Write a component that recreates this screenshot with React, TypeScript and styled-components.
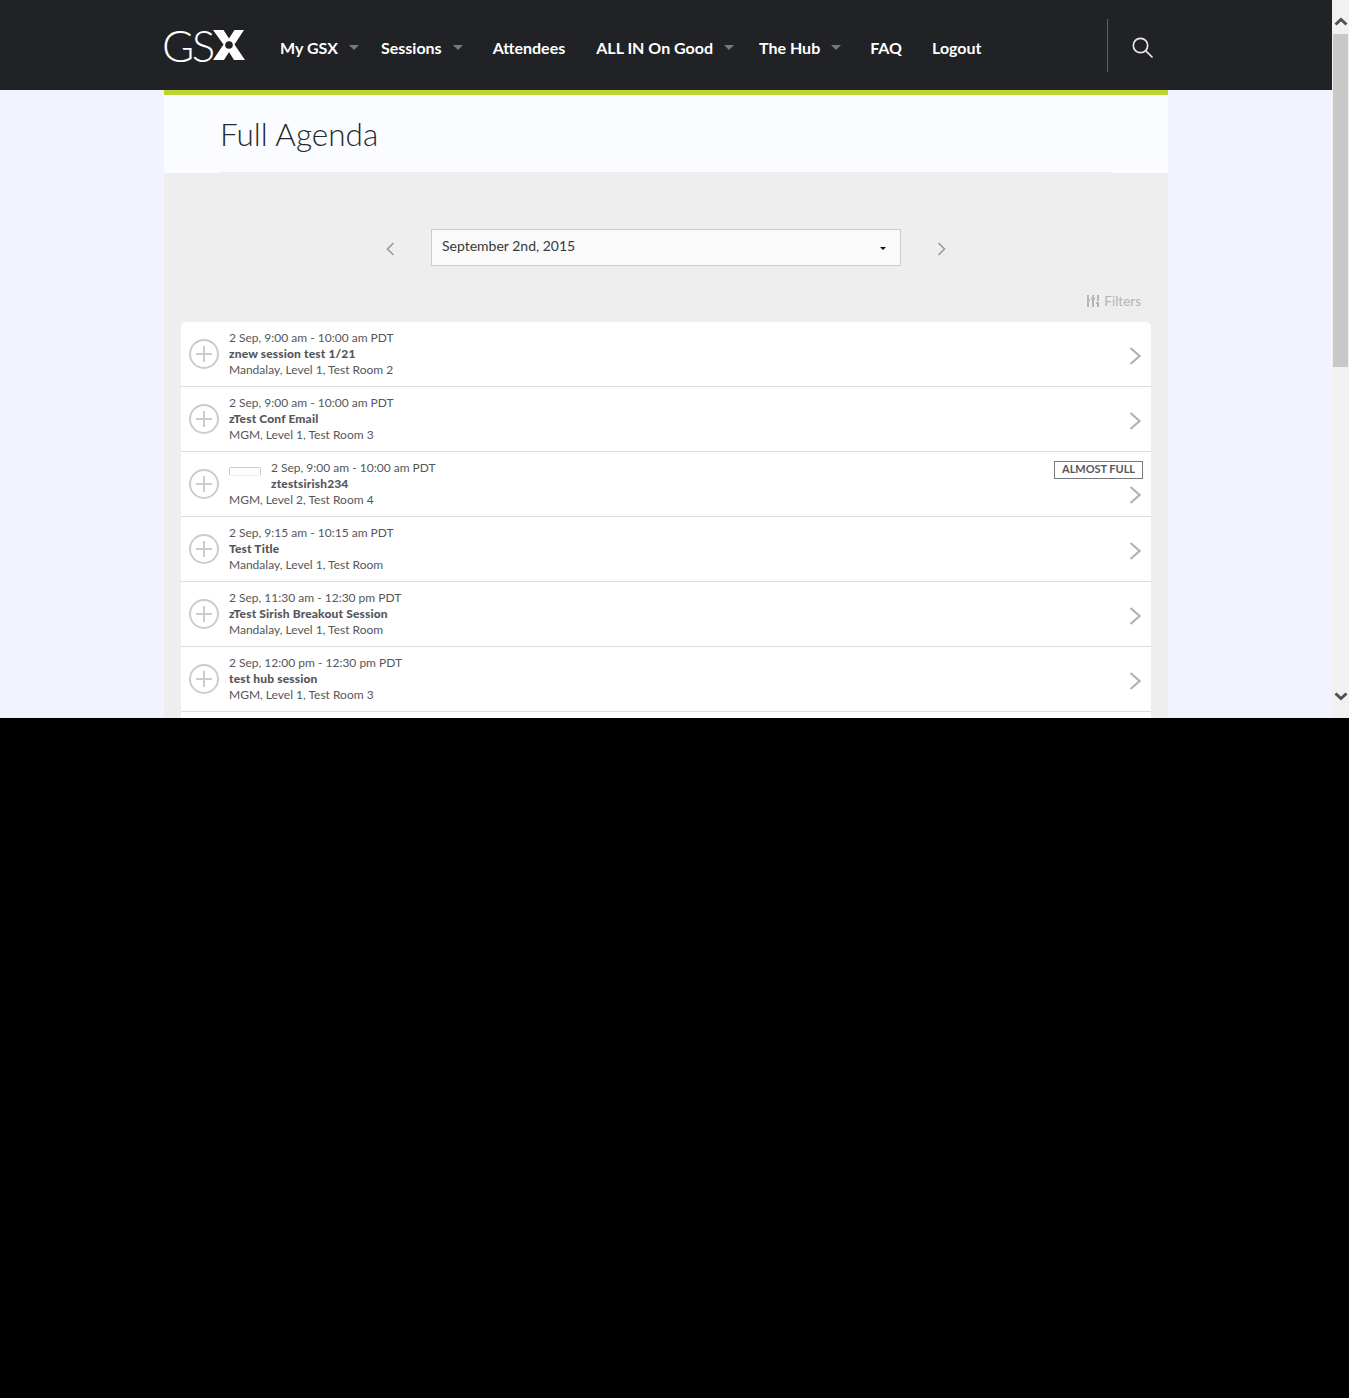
import React, { FC } from "react";
import styled, { createGlobalStyle } from "styled-components";

const GlobalStyle = createGlobalStyle`
  html, body {
    margin: 0;
    padding: 0;
    background: #000;
  }
  body {
    font-family: "Lato", "Liberation Sans", sans-serif;
    min-height: 1398px;
  }
`;

const Frame = styled.div`
  display: flex;
  width: 1349px;
  height: 718px;
  overflow: hidden;
`;

const Page = styled.div`
  width: 1332px;
  flex: none;
  background: #f1f3fe;
`;

const Header = styled.header`
  display: flex;
  align-items: center;
  height: 90px;
  padding-left: 164px;
  background: #202226;
`;

const Logo = styled.div`
  display: flex;
  align-items: center;
  width: 81px;
  height: 30px;
  margin-right: 35px;
  color: #fff;
`;

const LogoText = styled.span`
  margin-left: -2px;
  font-size: 44px;
  font-weight: 300;
  line-height: 30px;
  letter-spacing: -2.5px;
`;

const Nav = styled.nav`
  display: flex;
  align-items: center;
  box-sizing: border-box;
  width: 827px;
  height: 54px;
  padding-top: 4px;
`;

const NavItem = styled.a<{ $left: number }>`
  display: flex;
  align-items: center;
  margin-left: ${({ $left }) => $left}px;
  color: #fff;
  font-size: 16px;
  font-weight: 700;
  white-space: nowrap;
`;

const NavCaret = styled.i`
  width: 0;
  height: 0;
  margin-left: 11px;
  border-top: 5px solid #77797c;
  border-left: 5px solid transparent;
  border-right: 5px solid transparent;
`;

const SearchBox = styled.div`
  display: flex;
  align-items: center;
  height: 53px;
  padding-left: 24px;
  border-left: 1px solid #5d5f62;
  color: #e9e9e9;
`;

const SearchIcon = styled.svg`
  width: 22px;
  height: 22px;
  margin-top: 6px;
  fill: none;
  stroke: currentColor;
  stroke-width: 1.7;
`;

const Wrapper = styled.main`
  width: 1004px;
  margin-left: 164px;
  border-top: 5px solid #bcd630;
`;

const TitlePanel = styled.div`
  padding: 0 56px;
  background: #fbfcff;
`;

const Title = styled.h1`
  box-sizing: border-box;
  height: 78px;
  margin: 0;
  padding-top: 19px;
  border-bottom: 1px solid #eee;
  color: #26282c;
  font-size: 31.5px;
  font-weight: 300;
  line-height: 40px;
`;

const Content = styled.section`
  padding: 56px 17px 0;
  background: #eee;
`;

const DateRow = styled.div`
  display: flex;
  align-items: center;
  justify-content: center;
  gap: 36px;
  height: 37px;
`;

const DateSelect = styled.div`
  display: flex;
  align-items: center;
  justify-content: space-between;
  box-sizing: border-box;
  width: 470px;
  height: 37px;
  padding: 0 14px 4px 10px;
  border: 1px solid #ccc;
  background: #fafafa;
  color: #37393c;
  font-size: 14px;
`;

const SelectCaret = styled.i`
  width: 0;
  height: 0;
  margin-top: 5px;
  border-top: 3px solid #111;
  border-left: 3px solid transparent;
  border-right: 3px solid transparent;
`;

const PagerIcon = styled.svg`
  width: 9px;
  height: 14px;
  margin-top: 3px;
  fill: none;
  stroke: #9a9a9a;
  stroke-width: 1.6;
`;

const FilterRow = styled.div`
  display: flex;
  align-items: center;
  justify-content: flex-end;
  gap: 5px;
  box-sizing: border-box;
  height: 56px;
  padding: 14px 10px 0 0;
  color: #b4b4b4;
  font-size: 13.5px;
`;

const List = styled.div`
  overflow: hidden;
  border-radius: 5px 5px 0 0;
  background: #fff;
`;

const Row = styled.article`
  display: flex;
  box-sizing: border-box;
  height: 65px;
  padding: 8px 8px 0;
  border-bottom: 1px solid #dcdcdc;
  color: #55575a;
  font-size: 12px;
  line-height: 16px;
`;

const AddIcon = styled.svg`
  flex: none;
  width: 32px;
  height: 32px;
  margin: 8px 9px 0 -1px;
  fill: none;
  stroke: #ccc;
  stroke-width: 2;
`;

const RowBody = styled.div`
  flex: 1;
  white-space: nowrap;
`;

const Heading = styled.div`
  display: flex;
`;

const Thumb = styled.span`
  box-sizing: border-box;
  width: 32px;
  height: 9px;
  margin: 7px 10px 0 0;
  border: 1px solid #ccc;
  border-bottom-color: #ececec;
  border-radius: 2px;
`;

const SessionName = styled.div`
  font-weight: 900;
  letter-spacing: 0.15px;
`;

const RowSide = styled.div`
  display: flex;
  flex-direction: column;
  align-items: flex-end;
`;

const Badge = styled.span`
  box-sizing: border-box;
  height: 18px;
  margin-top: 1px;
  padding: 0 7px;
  border: 1px solid #77797c;
  color: #55575a;
  font-size: 11px;
  font-weight: 700;
  line-height: 14px;
  letter-spacing: -0.05px;
`;

const RowArrow = styled.svg<{ $low?: boolean }>`
  width: 12px;
  height: 18px;
  margin-top: ${({ $low }) => ($low ? "7px" : "17px")};
  margin-right: 2px;
  fill: none;
  stroke: #b3b3b3;
  stroke-width: 2.2;
`;

const Scrollbar = styled.div`
  display: flex;
  flex-direction: column;
  flex: none;
  box-sizing: border-box;
  width: 17px;
  padding: 13px 0 13px 1px;
  background: #f1f1f1;
`;

const ScrollButton = styled.svg`
  width: 16px;
  height: 17px;
  flex: none;
  fill: none;
  stroke: #505050;
  stroke-width: 3;
`;

const ScrollTrack = styled.div`
  flex: 1;
  padding-top: 4px;
`;

const ScrollThumb = styled.div`
  height: 333px;
  margin-right: 1px;
  background: #c8c8c8;
`;

interface Session {
  time: string;
  name: string;
  place: string;
  thumb?: boolean;
  badge?: string;
}

const sessions: Session[] = [
  { time: "2 Sep, 9:00 am - 10:00 am PDT", name: "znew session test 1/21", place: "Mandalay, Level 1, Test Room 2" },
  { time: "2 Sep, 9:00 am - 10:00 am PDT", name: "zTest Conf Email", place: "MGM, Level 1, Test Room 3" },
  { time: "2 Sep, 9:00 am - 10:00 am PDT", name: "ztestsirish234", place: "MGM, Level 2, Test Room 4", thumb: true, badge: "ALMOST FULL" },
  { time: "2 Sep, 9:15 am - 10:15 am PDT", name: "Test Title", place: "Mandalay, Level 1, Test Room" },
  { time: "2 Sep, 11:30 am - 12:30 pm PDT", name: "zTest Sirish Breakout Session", place: "Mandalay, Level 1, Test Room" },
  { time: "2 Sep, 12:00 pm - 12:30 pm PDT", name: "test hub session", place: "MGM, Level 1, Test Room 3" },
];

const navItems = [
  { label: "My GSX", left: 0, caret: true },
  { label: "Sessions", left: 22, caret: true },
  { label: "Attendees", left: 30, caret: false },
  { label: "ALL IN On Good", left: 31, caret: true },
  { label: "The Hub", left: 25, caret: true },
  { label: "FAQ", left: 29, caret: false },
  { label: "Logout", left: 30, caret: false },
];

const SessionRow: FC<{ session: Session }> = ({ session }) => (
  <Row>
    <AddIcon viewBox="0 0 32 32">
      <circle cx="16" cy="16" r="14" />
      <path d="M16 8v16M8 16h16" />
    </AddIcon>
    <RowBody>
      {session.thumb ? (
        <Heading>
          <Thumb />
          <div>
            <div>{session.time}</div>
            <SessionName>{session.name}</SessionName>
          </div>
        </Heading>
      ) : (
        <>
          <div>{session.time}</div>
          <SessionName>{session.name}</SessionName>
        </>
      )}
      <div>{session.place}</div>
    </RowBody>
    <RowSide>
      {session.badge && <Badge>{session.badge}</Badge>}
      <RowArrow $low={!!session.badge} viewBox="0 0 12 18">
        <path d="M1.5 1l9 8-9 8" />
      </RowArrow>
    </RowSide>
  </Row>
);

const App: FC = () => (
  <>
    <GlobalStyle />
    <Frame>
      <Page>
        <Header>
          <Logo>
            <LogoText>GS</LogoText>
            <svg width="32" height="30" viewBox="0 0 32 30">
              <path
                fill="#fff"
                d="M0 0h10.5L16 8.5 21.5 0H31l-9.5 14.5L32 30H21l-5-8-5 8H0l10.5-15.500z"
              />
              <circle cx="16" cy="15" r="3.800" fill="#202226" />
            </svg>
          </Logo>
          <Nav>
            {navItems.map((item) => (
              <NavItem key={item.label} $left={item.left}>
                {item.label}
                {item.caret && <NavCaret />}
              </NavItem>
            ))}
          </Nav>
          <SearchBox>
            <SearchIcon viewBox="0 0 22 22">
              <circle cx="8.500" cy="8.500" r="7.200" />
              <path d="M13.800 13.800L20.500 20.500" />
            </SearchIcon>
          </SearchBox>
        </Header>
        <Wrapper>
          <TitlePanel>
            <Title>Full Agenda</Title>
          </TitlePanel>
          <Content>
            <DateRow>
              <PagerIcon viewBox="0 0 9 14">
                <path d="M7.500 1L1.500 7l6 6" />
              </PagerIcon>
              <DateSelect>
                September 2nd, 2015
                <SelectCaret />
              </DateSelect>
              <PagerIcon viewBox="0 0 9 14">
                <path d="M1.500 1l6 6-6 6" />
              </PagerIcon>
            </DateRow>
            <FilterRow>
              <svg width="12" height="12" viewBox="0 0 12 12" fill="#b4b4b4">
                <path d="M0 0h2v5H0zM0 7h2v5H0zM5 0h2v2H5zM5 4h2v8H5zM10 0h2v6h-2zM10 8h2v4h-2zM0 4.500h3v2H0zM4 2.500h4v2H4zM9 7h3v2H9z" />
              </svg>
              Filters
            </FilterRow>
            <List>
              {sessions.map((session) => (
                <SessionRow key={session.name} session={session} />
              ))}
              <Row />
            </List>
          </Content>
        </Wrapper>
      </Page>
      <Scrollbar>
        <ScrollButton viewBox="0 0 16 17">
          <path d="M2.500 11.500L8 6.500l5.500 5" />
        </ScrollButton>
        <ScrollTrack>
          <ScrollThumb />
        </ScrollTrack>
        <ScrollButton viewBox="0 0 16 17">
          <path d="M2.500 5.500L8 10.500l5.500-5" />
        </ScrollButton>
      </Scrollbar>
    </Frame>
  </>
);

export default App;
